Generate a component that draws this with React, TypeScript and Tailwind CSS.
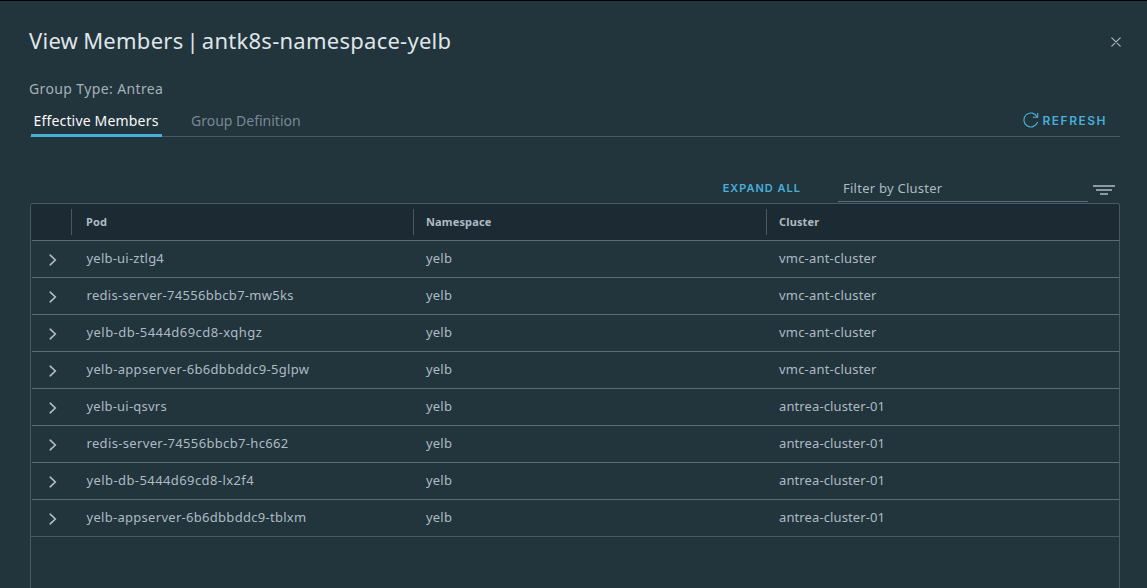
const rows: { pod: string; cluster: string; podClass: string; clusterClass: string }[] = [
  { pod: "yelb-ui-ztlg4", cluster: "vmc-ant-cluster", podClass: "tracking-[0.22px]", clusterClass: "tracking-[0.2px]" },
  { pod: "redis-server-74556bbcb7-mw5ks", cluster: "vmc-ant-cluster", podClass: "tracking-[0.3px]", clusterClass: "tracking-[0.2px]" },
  { pod: "yelb-db-5444d69cd8-xqhgz", cluster: "vmc-ant-cluster", podClass: "tracking-[0.45px]", clusterClass: "tracking-[0.2px]" },
  { pod: "yelb-appserver-6b6dbbddc9-5glpw", cluster: "vmc-ant-cluster", podClass: "tracking-[0.33px]", clusterClass: "tracking-[0.2px]" },
  { pod: "yelb-ui-qsvrs", cluster: "antrea-cluster-01", podClass: "tracking-[0.22px]", clusterClass: "tracking-[0.11px]" },
  { pod: "redis-server-74556bbcb7-hc662", cluster: "antrea-cluster-01", podClass: "tracking-[0.34px]", clusterClass: "tracking-[0.11px]" },
  { pod: "yelb-db-5444d69cd8-lx2f4", cluster: "antrea-cluster-01", podClass: "tracking-[0.41px]", clusterClass: "tracking-[0.11px]" },
  { pod: "yelb-appserver-6b6dbbddc9-tblxm", cluster: "antrea-cluster-01", podClass: "tracking-[0.29px]", clusterClass: "tracking-[0.11px]" },
];

function CloseIcon() {
  return (
    <svg width="10" height="10" viewBox="0 0 10 10" stroke="#b3bec4" strokeWidth="1.1" strokeLinecap="round">
      <path d="M0.8 0.8L9.2 9.2M9.2 0.8L0.8 9.2" />
    </svg>
  );
}

function RefreshIcon() {
  return (
    <svg className="mb-[2px]" width="16" height="16" viewBox="0 0 16 16" fill="none" stroke="#49afd9" strokeWidth="1.1" strokeLinecap="round">
      <path d="M14.5 10.3A7 7 0 1 1 14.2 4.9" />
      <path d="M14.7 1.2V5.2H10.3" />
    </svg>
  );
}

function Chevron() {
  return (
    <svg width="8" height="12" viewBox="0 0 8 12" fill="none" stroke="#b3bec4" strokeWidth="1.6" strokeLinecap="round">
      <path d="M1.2 1.2L6.3 6L1.2 10.8" />
    </svg>
  );
}

function FilterIcon() {
  return (
    <svg width="22" height="10" viewBox="0 0 22 10" fill="#8b9aa5">
      <rect x="0" y="0" width="22" height="2" />
      <rect x="3" y="4" width="16" height="2" />
      <rect x="7" y="8" width="8" height="2" />
    </svg>
  );
}

const columns = "grid grid-cols-[39px_342px_353px_1fr]";

export default function App() {
  return (
    <div className="flex h-[588px] w-full flex-col overflow-hidden border-t border-black bg-[#22343c] pr-[27px] pl-[30px] font-['Noto_Sans',sans-serif] text-[#adbbc4]">
      <header className="flex h-[78px] items-center justify-between">
        <h1 className="-ml-px text-[22px] leading-8 tracking-[0.26px] whitespace-nowrap text-[#dfe5e8] [word-spacing:-3px]">
          <span className="[word-spacing:-1px]">View Members</span> | antk8s-namespace-yelb
        </h1>
        <button className="mt-1 mr-[-1px]" aria-label="Close"><CloseIcon /></button>
      </header>
      <p className="-ml-px h-[22px] text-sm leading-5 tracking-[0.38px] text-[#a3b1b9]">Group Type: Antrea</p>
      <nav className="flex h-9 shrink-0 items-stretch border-b border-[#495a67]">
        <button className="ml-px h-9 w-[131px] border-b-3 border-[#49afd9] pt-[6px] pr-px text-sm tracking-[0.18px] whitespace-nowrap text-[#fafafa]">
          Effective Members
        </button>
        <button className="ml-[29px] h-9 pt-[3px] text-sm text-[#788993]">Group Definition</button>
        <button className="mr-[13px] ml-auto flex h-9 items-center gap-[4px] pt-[3px] font-['Inter',sans-serif] text-[12px] font-semibold tracking-[1.5px] text-[#49afd9]">
          <RefreshIcon />
          REFRESH
        </button>
      </nav>
      <div className="flex h-[66px] shrink-0 items-end justify-end">
        <button className="mr-[37px] h-[30px] font-['Inter',sans-serif] text-[11px] leading-[28px] font-semibold tracking-[1px] text-[#49afd9]">EXPAND ALL</button>
        <div className="mb-px h-[28px] w-[250px] border-b border-[#5b6d78] pl-[5px] text-[13px] leading-[29px] tracking-[0.25px]">
          Filter by Cluster
        </div>
        <div className="mr-[5px] mb-2 ml-[5px]"><FilterIcon /></div>
      </div>
      <section className="flex grow flex-col rounded-t-[3px] border border-b-0 border-[#495a67]">
        <div className="h-[37px] shrink-0 rounded-t-[2px] bg-[#1c2a33] pl-px">
          <div className={`${columns} h-[37px] items-center border-b border-[#5b6d78] text-[11px] font-bold tracking-[0.15px]`}>
            <span />
            <span className="h-[26px] border-l border-[#495a67] pl-[14px] leading-[25px]">Pod</span>
            <span className="h-[26px] border-l border-[#495a67] pl-3 leading-[25px]">Namespace</span>
            <span className="h-[26px] border-l border-[#495a67] pl-3 leading-[25px]">Cluster</span>
          </div>
        </div>
        {rows.map((row) => (
          <div key={row.pod} className={`${columns} ml-px h-[37px] shrink-0 border-b border-[#5b6d78] text-[13px] leading-[35px] last:ml-0 last:border-[#495a67] last:pl-px`}>
            <span className="flex items-center pt-[2px] pl-[17px]"><Chevron /></span>
            <span className={`pl-[15.5px] ${row.podClass}`}>{row.pod}</span>
            <span className="pl-[13px] tracking-[0.2px]">yelb</span>
            <span className={`pl-[13px] ${row.clusterClass}`}>{row.cluster}</span>
          </div>
        ))}
      </section>
    </div>
  );
}
